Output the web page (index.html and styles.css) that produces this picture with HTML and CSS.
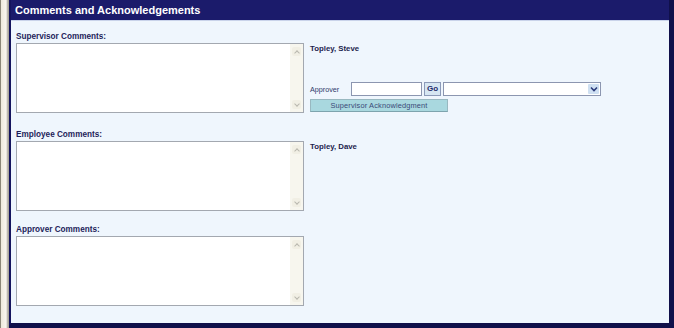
FILE: index.html
```html
<!DOCTYPE html>
<html>
<head>
<meta charset="utf-8">
<link rel="stylesheet" href="styles.css">
</head>
<body>
<div class="desk">
  <div class="panel">
    <div class="header">Comments and Acknowledgements</div>
    <div class="content">
      <div class="row r1">
        <div class="left">
          <div class="label">Supervisor Comments:</div>
          <div class="ta"><div class="sb"><span class="arr up"></span><span class="arr down"></span></div></div>
        </div>
        <div class="right">
          <div class="name">Topley, Steve</div>
          <div class="approver">
            <span class="alabel">Approver</span>
            <span class="input"></span>
            <span class="go">Go</span>
            <span class="select"><span class="selbtn"><svg width="8" height="6" viewBox="0 0 8 6"><path d="M1 1.5 L4 4.5 L7 1.5" fill="none" stroke="#2a3a7a" stroke-width="1.6"/></svg></span></span>
          </div>
          <div class="ack">Supervisor Acknowledgment</div>
        </div>
      </div>
      <div class="row r2">
        <div class="left">
          <div class="label">Employee Comments:</div>
          <div class="ta"><div class="sb"><span class="arr up"></span><span class="arr down"></span></div></div>
        </div>
        <div class="right">
          <div class="name">Topley, Dave</div>
        </div>
      </div>
      <div class="row">
        <div class="left">
          <div class="label">Approver Comments:</div>
          <div class="ta"><div class="sb"><span class="arr up"></span><span class="arr down"></span></div></div>
        </div>
      </div>
    </div>
  </div>
</div>
</body>
</html>
```
FILE: styles.css
```css
html, body { margin: 0; padding: 0; }
body {
  width: 674px;
  height: 328px;
  overflow: hidden;
  background: #f6f3ea;
  font-family: "Liberation Sans", Arial, sans-serif;
}
.desk {
  display: flex;
  height: 328px;
  padding-left: 8px;
  border-left: 1px solid #8a8778;
  box-sizing: border-box;
  background: linear-gradient(to right, #ede9dc 0, #f8f6ef 5px, #a9a69a 7px);
}
.panel {
  flex: 1;
  display: flex;
  flex-direction: column;
  border-left: 2px solid #14145e;
  border-right: 5px solid #10104a;
  border-bottom: 5px solid #10104a;
  background: #eff6fd;
}
.header {
  height: 20px;
  background: #1b1b6b;
  color: #ffffff;
  font-weight: bold;
  font-size: 11px;
  line-height: 21px;
  padding-left: 4px;
  border-bottom: 1px solid #c9d3ea;
}
.content {
  padding: 11px 0 0 5px;
}
.row {
  display: flex;
  margin-bottom: 14px;
}
.row.r1 { margin-bottom: 17px; }
.left {
  width: 288px;
}
.label {
  font-size: 8.2px;
  font-weight: bold;
  color: #1e1e5a;
  height: 10px;
  line-height: 10px;
  margin-bottom: 1px;
}
.ta {
  height: 68px;
  background: #fff;
  border: 1px solid #a3a8b0;
  display: flex;
  justify-content: flex-end;
}
.sb {
  width: 13px;
  background: #f7f6ee;
  display: flex;
  flex-direction: column;
  justify-content: space-between;
  align-items: center;
  padding: 3px 0;
}
.arr {
  width: 9px;
  height: 9px;
  background: #f1efe4;
  border-radius: 2px;
  position: relative;
}
.arr::after {
  content: "";
  position: absolute;
  left: 2.5px;
  width: 3px;
  height: 3px;
  border-left: 1px solid #b9b8ae;
  border-top: 1px solid #b9b8ae;
}
.arr.up::after { top: 3.5px; transform: rotate(45deg); }
.arr.down::after { top: 1.5px; transform: rotate(225deg); }
.right {
  padding-left: 6px;
  padding-top: 1px;
  display: flex;
  flex-direction: column;
}
.name {
  font-size: 7.8px;
  font-weight: bold;
  color: #1e1e4e;
  margin-top: 11px;
  height: 10px;
  line-height: 10px;
}
.approver {
  display: flex;
  align-items: center;
  margin-top: 28px;
  height: 14px;
}
.alabel {
  font-size: 7.2px;
  color: #2e3a6a;
  width: 41px;
}
.input {
  width: 69px;
  height: 12px;
  background: #fff;
  border: 1px solid #8c96b0;
}
.go {
  margin-left: 2px;
  width: 15px;
  height: 12px;
  border: 1px solid #8c9ab8;
  background: #d6e6f2;
  color: #1e2a6a;
  font-size: 8px;
  font-weight: bold;
  text-align: center;
  line-height: 12px;
}
.select {
  margin-left: 2px;
  width: 155px;
  height: 12px;
  background: #fff;
  border: 1px solid #8c96b0;
  display: flex;
  justify-content: flex-end;
  align-items: center;
  padding-right: 1px;
}
.selbtn {
  width: 11px;
  height: 10px;
  background: #cfe0f2;
  border-radius: 1px;
  display: flex;
  align-items: center;
  justify-content: center;
}
.ack {
  margin-top: 3px;
  width: 136px;
  height: 11px;
  background: #a9d8df;
  border: 1px solid #98b8c0;
  border-bottom-color: #7ea4ae;
  color: #3a4a78;
  font-size: 7.4px;
  letter-spacing: 0.15px;
  line-height: 11px;
  text-align: center;
}
```
